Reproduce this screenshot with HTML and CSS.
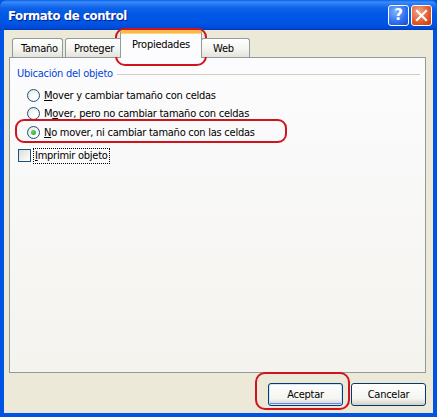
FILE: index.html
```html
<!DOCTYPE html>
<html lang="es">
<head>
<meta charset="utf-8">
<title>Formato de control</title>
<link rel="stylesheet" href="styles.css">
</head>
<body>
<div class="window">
  <div class="titlebar">
    <span class="title">Formato de control</span>
    <div class="caption-buttons">
      <div class="cap-btn help">?</div>
      <div class="cap-btn close">
        <svg width="13" height="13" viewBox="0 0 13 13"><path d="M2 2 L11 11 M11 2 L2 11" stroke="#fff" stroke-width="2.2" stroke-linecap="square"/></svg>
      </div>
    </div>
  </div>
  <div class="client">
    <div class="tabs">
      <div class="tab">Tamaño</div>
      <div class="tab">Proteger</div>
      <div class="tab selected">Propiedades</div>
      <div class="tab">Web</div>
    </div>
    <div class="panel">
      <div class="group-head"><span class="group-label">Ubicación del objeto</span><span class="group-line"></span></div>
      <div class="options">
        <div class="option"><span class="radio"></span><span><u>M</u>over y cambiar tamaño con celdas</span></div>
        <div class="option"><span class="radio"></span><span>M<u>o</u>ver, pero no cambiar tamaño con celdas</span></div>
        <div class="option"><span class="radio checked"></span><span><u>N</u>o mover, ni cambiar tamaño con las celdas</span></div>
      </div>
      <div class="check-row"><span class="checkbox"></span><span class="focus"><u>I</u>mprimir objeto</span></div>
    </div>
    <div class="buttons">
      <div class="btn default">Aceptar</div>
      <div class="btn">Cancelar</div>
    </div>
  </div>
  <div class="mark mark-tab"></div>
  <div class="mark mark-radio"></div>
  <div class="mark mark-ok"></div>
</div>
</body>
</html>
```
FILE: styles.css
```css
html, body { margin: 0; padding: 0; }
body { width: 437px; height: 417px; overflow: hidden; background: #0054E3; }
.window {
  position: relative;
  width: 437px; height: 417px; box-sizing: border-box;
  display: flex; flex-direction: column;
  font-family: "DejaVu Sans Condensed", "DejaVu Sans", sans-serif;
  font-size: 11px; color: #000;
  letter-spacing: -0.25px;
}
.titlebar {
  height: 30px; flex: none;
  display: flex; align-items: center; justify-content: space-between;
  padding: 0 5px 0 8px;
  background: linear-gradient(#0A5FEC 0px, #3B8DF8 2px, #2A7CF4 4px, #0E62E8 8px, #0058E6 14px, #0054E3 24px, #0049D6 28px, #003DB8 30px);
  border-radius: 7px 7px 0 0;
}
.title {
  color: #fff; font-weight: bold; font-size: 13px;
  font-family: "DejaVu Sans Condensed", "DejaVu Sans", sans-serif;
  text-shadow: 1px 1px 0 #0A1E88;
  letter-spacing: -0.4px;
  padding-top: 1px;
}
.caption-buttons { display: flex; gap: 2px; }
.cap-btn {
  width: 21px; height: 21px; box-sizing: border-box;
  border: 1px solid #fff; border-radius: 3px;
  display: flex; align-items: center; justify-content: center;
  color: #fff; font-family: "DejaVu Sans", sans-serif; font-weight: bold; font-size: 15px;
  letter-spacing: 0;
}
.help { background: radial-gradient(circle at 35% 30%, #7FB2FF, #2B6EF0 60%, #1748C8); }
.close { background: radial-gradient(circle at 35% 30%, #F2A58A, #E2582A 60%, #C03A10); }
.client {
  flex: 1;
  display: flex; flex-direction: column;
  background: #ECE9D8;
  margin: 0 4px 4px 4px;
  padding: 2px 7px 0 5px;
}
.tabs {
  display: flex; align-items: flex-end;
  height: 25px; padding-left: 3px;
  position: relative; z-index: 1;
}
.tab {
  height: 19px; box-sizing: border-box;
  padding: 3px 8px 0 8px;
  border: 1px solid #919B9C; border-bottom: none;
  border-radius: 3px 3px 0 0;
  background: linear-gradient(#FFFFFF, #F3F3EF 60%, #E3E2DA);
  margin-right: 2px;
  white-space: nowrap;
  overflow: hidden;
}
.tab:nth-child(1) { width: 51px; }
.tab:nth-child(2) { width: 58px; margin-right: 0; }
.tab:nth-child(4) { width: 49px; padding-left: 11px; }
.tab.selected {
  width: 82px;
  margin: 0 -1px -1px -3px;
  padding-top: 5px; padding-left: 11px;
  background: #FCFCFE;
  border-top: 3px solid #F7B94A;
  box-shadow: inset 0 1px 0 #FFD878;
  position: relative;
  height: 28px;
}
.panel {
  height: 316px; box-sizing: border-box;
  border: 1px solid #919B9C;
  background: linear-gradient(#FCFCFE, #F4F3EE);
  padding: 8px 0 0 7px;
}
.group-head { display: flex; align-items: center; height: 14px; padding-right: 5px; }
.group-label { color: #0046D5; margin-right: 4px; }
.group-line { flex: 1; height: 1px; background: #D0D0BF; margin-top: 2px; }
.options { padding: 6px 0 0 10px; display: flex; flex-direction: column; }
.option { display: flex; align-items: center; height: 18.5px; gap: 4px; }
.radio {
  width: 13px; height: 13px; box-sizing: border-box;
  border: 1px solid #1C5180; border-radius: 50%;
  background: radial-gradient(circle at 65% 65%, #FFFFFF 20%, #E2E2DC 90%);
  display: flex; align-items: center; justify-content: center;
  flex: none;
}
.radio.checked::after {
  content: ""; width: 5px; height: 5px; border-radius: 50%;
  background: radial-gradient(circle at 40% 35%, #6AD06A, #21A121);
}
.check-row { display: flex; align-items: center; gap: 2px; padding: 6px 0 0 1px; }
.checkbox {
  width: 13px; height: 13px; box-sizing: border-box;
  border: 1px solid #1C5180;
  background: linear-gradient(135deg, #DCDCD6, #FFFFFF);
  flex: none;
}
.focus { border: 1px dotted #000; padding: 0 1px 1px 1px; }
.buttons {
  display: flex; justify-content: flex-end; gap: 8px;
  padding-top: 10px; padding-right: 0;
}
.btn {
  width: 75px; height: 23px; box-sizing: border-box;
  border: 1px solid #003C74; border-radius: 3px;
  background: linear-gradient(#FFFFFF, #F4F4F0 70%, #D6D0C5);
  display: flex; align-items: center; justify-content: center;
}
.btn.default { box-shadow: inset 0 0 0 1px #CEE7FF, inset 0 -1px 0 1px #6982EE; }
.mark {
  position: absolute; border: 2px solid #D0141E; border-radius: 10px;
  box-sizing: border-box;
}
.mark-tab { left: 115px; top: 28px; width: 92px; height: 38px; border-radius: 9px 9px 10px 10px; }
.mark-radio { left: 15px; top: 119px; width: 272px; height: 24px; border-radius: 9px; }
.mark-ok { left: 255px; top: 372px; width: 95px; height: 38px; }
```
